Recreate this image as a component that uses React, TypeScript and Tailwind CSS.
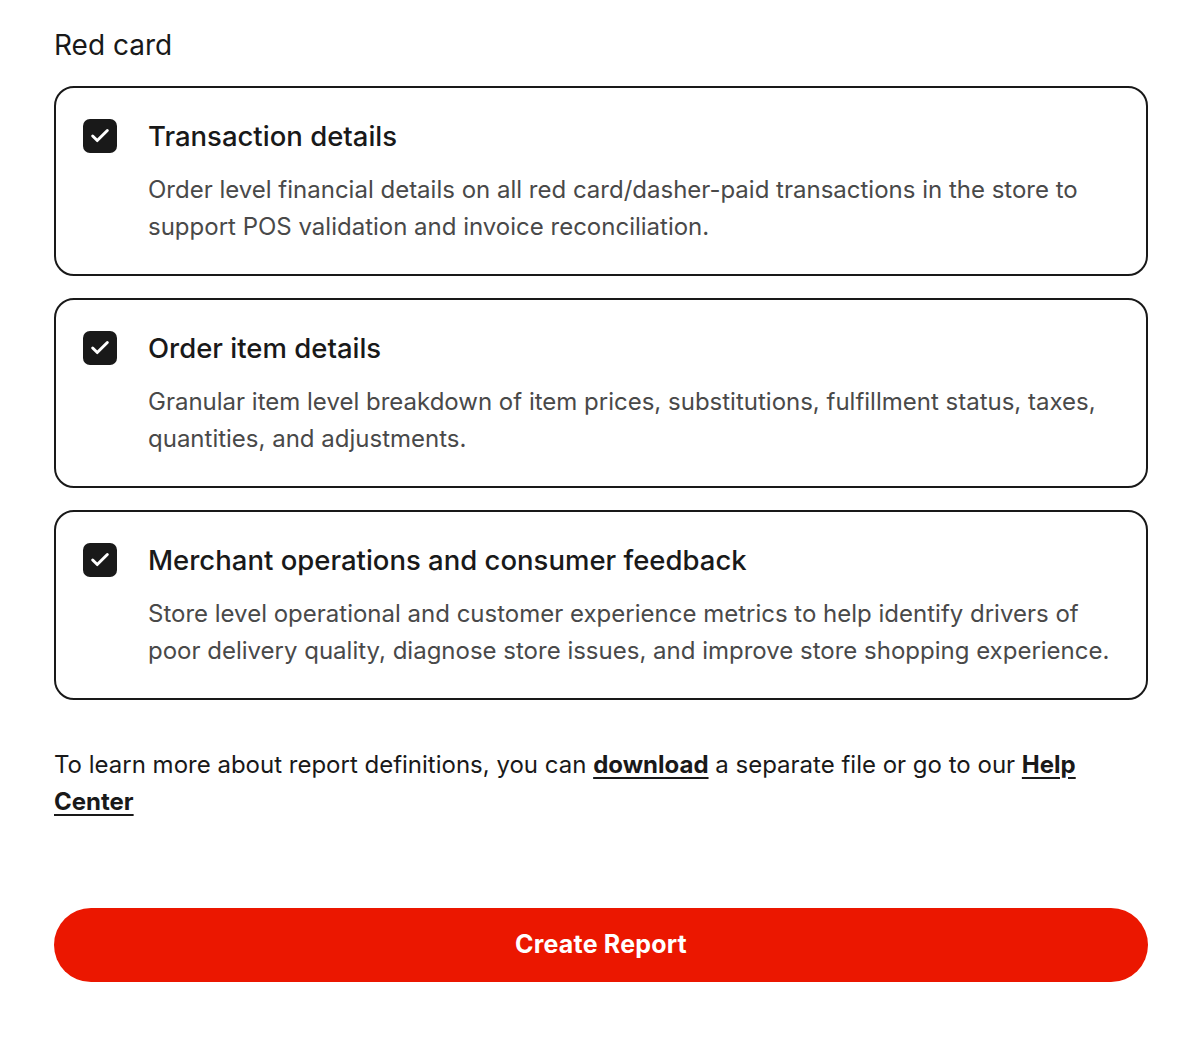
import { Check } from 'lucide-react';

interface ReportOption {
  title: string;
  description: string;
}

const OPTIONS: ReportOption[] = [
  {
    title: 'Transaction details',
    description:
      'Order level financial details on all red card/dasher-paid transactions in the store to support POS validation and invoice reconciliation.',
  },
  {
    title: 'Order item details',
    description:
      'Granular item level breakdown of item prices, substitutions, fulfillment status, taxes, quantities, and adjustments.',
  },
  {
    title: 'Merchant operations and consumer feedback',
    description:
      'Store level operational and customer experience metrics to help identify drivers of poor delivery quality, diagnose store issues, and improve store shopping experience.',
  },
];

function OptionCard({ option }: { option: ReportOption }) {
  return (
    <div className="flex gap-[31px] rounded-[20px] border-[2.5px] border-[#191919] pl-[27px] pr-[28px] pt-[31px] pb-[29px]">
      <div className="w-[34px] h-[34px] shrink-0 rounded-[7px] bg-[#191919] flex items-center justify-center">
        <Check className="w-[22px] h-[22px] text-white" strokeWidth={3.2} />
      </div>
      <div className="flex flex-col gap-[18px]">
        <h3 className="text-[27.5px] leading-[34px] font-medium text-[#191919]">{option.title}</h3>
        <p className="text-[24px] leading-[37px] text-[#494949]">{option.description}</p>
      </div>
    </div>
  );
}

export default function App() {
  return (
    <div className="min-h-screen bg-white pl-[54px] pr-[52px] pt-[28px] font-['Inter',sans-serif] antialiased">
      <h2 className="text-[28px] leading-[34px] text-[#191919]">Red card</h2>

      <div className="mt-[24px] flex flex-col gap-[22px]">
        {OPTIONS.map(o => (
          <OptionCard key={o.title} option={o} />
        ))}
      </div>

      <p className="mt-[46px] pr-[40px] text-[24px] leading-[37px] text-[#191919]">
        <span>To learn more about report definitions, you can </span>
        <span className="font-bold underline underline-offset-4">download</span>
        <span> a separate file or go to our </span>
        <span className="font-bold underline underline-offset-4">Help Center</span>
      </p>

      <button className="mt-[88px] w-full h-[74px] rounded-full bg-[#EB1700] text-white text-[25px] font-bold tracking-[0.2px]">
        Create Report
      </button>
    </div>
  );
}
